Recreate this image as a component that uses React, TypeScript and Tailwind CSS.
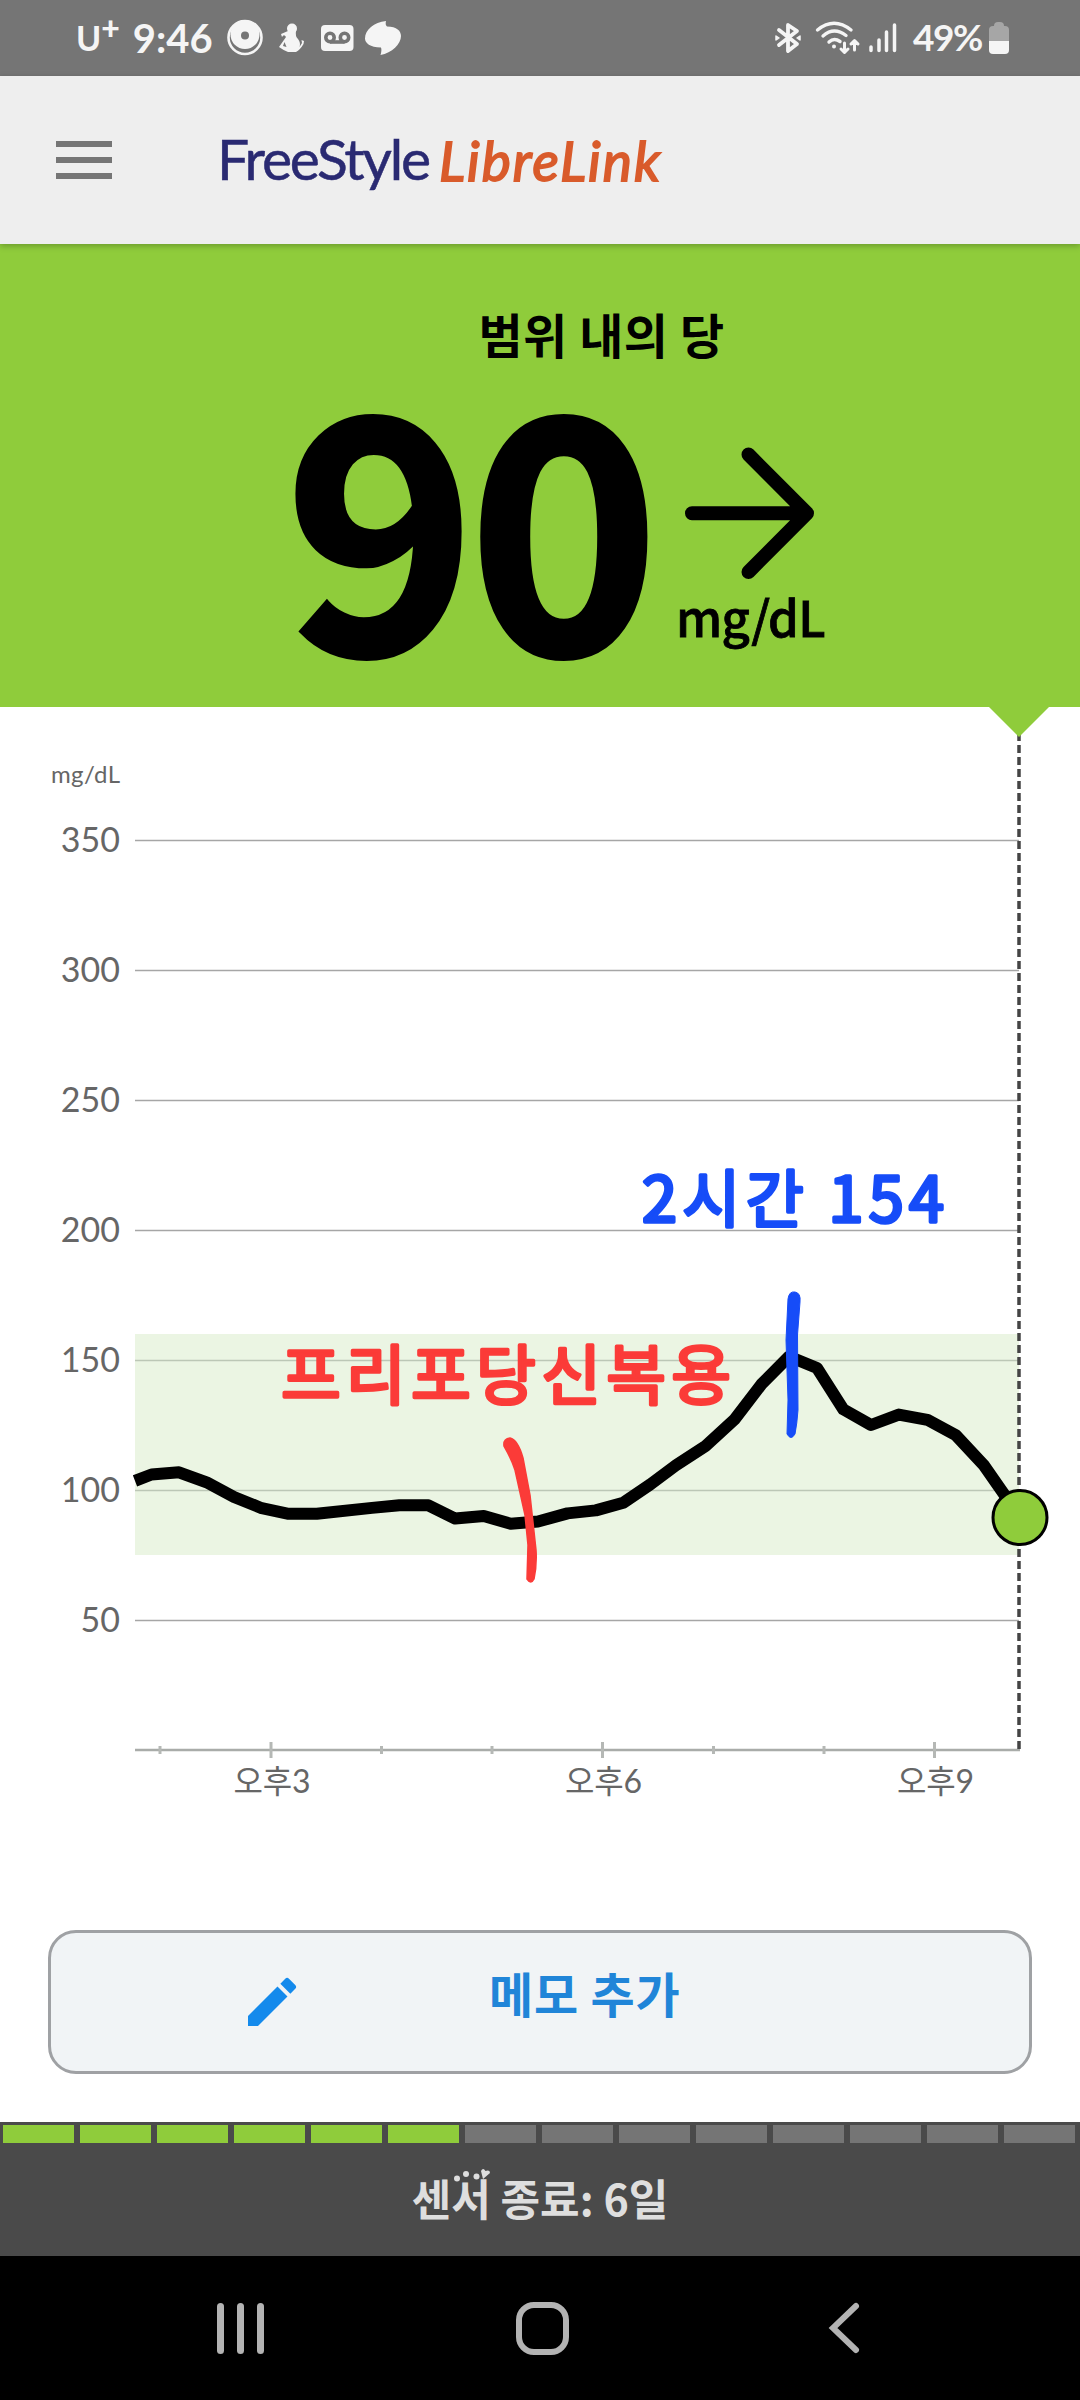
import { MdEdit } from "react-icons/md";

interface Point {
  x: number;
  y: number;
}

const gridLines = [
  { value: 350, y: 840.5 },
  { value: 300, y: 970.5 },
  { value: 250, y: 1100.5 },
  { value: 200, y: 1230.5 },
  { value: 150, y: 1360.5 },
  { value: 100, y: 1490.5 },
  { value: 50, y: 1620.5 },
];

const hourTicks = [
  { x: 160 },
  { x: 271, label: "오후3" },
  { x: 381.5 },
  { x: 492 },
  { x: 602.5, label: "오후6" },
  { x: 713.5 },
  { x: 824 },
  { x: 934.5, label: "오후9" },
];

const glucose: Point[] = [
  { x: 135, y: 1480.8 },
  { x: 151.5, y: 1474.5 },
  { x: 179, y: 1472.3 },
  { x: 206.6, y: 1482.3 },
  { x: 234, y: 1497 },
  { x: 261.7, y: 1508.2 },
  { x: 288.6, y: 1513.8 },
  { x: 316.8, y: 1513.8 },
  { x: 372, y: 1507.9 },
  { x: 399.4, y: 1505.3 },
  { x: 428.4, y: 1505.3 },
  { x: 455.2, y: 1518.6 },
  { x: 483.8, y: 1516 },
  { x: 510.7, y: 1523.8 },
  { x: 538, y: 1521.5 },
  { x: 567.5, y: 1513.4 },
  { x: 595.8, y: 1510.4 },
  { x: 623.3, y: 1502.7 },
  { x: 650.2, y: 1484.5 },
  { x: 676, y: 1465.3 },
  { x: 706, y: 1445.7 },
  { x: 734.6, y: 1419.4 },
  { x: 761.4, y: 1384.3 },
  { x: 789, y: 1356.5 },
  { x: 817, y: 1368 },
  { x: 843.4, y: 1409.4 },
  { x: 871, y: 1425 },
  { x: 898.8, y: 1414.6 },
  { x: 927.4, y: 1419.8 },
  { x: 956, y: 1435.3 },
  { x: 984.2, y: 1465.7 },
  { x: 1020, y: 1517 },
];

const SENSOR_DAYS = 14;
const DAYS_USED = 6;

function StatusBar() {
  return (
    <div className="flex h-[76px] w-full items-center bg-[#757575] pl-[76px] pr-[71px] font-['Lato','Noto_Sans_CJK_KR',sans-serif] text-[#f5f5f5]">
      <span className="text-[34px] font-bold leading-none">U</span>
      <span className="-mt-5 text-[32px] font-black leading-none">+</span>
      <span className="ml-[13px] text-[40px] font-bold leading-none">9:46</span>
      <svg className="ml-auto h-[56px] w-[180px] shrink-0" viewBox="225 10 180 56" fill="#f5f5f5">
        <circle cx="245" cy="37.5" r="16.5" fill="none" stroke="#f5f5f5" strokeWidth="2.6" />
        <circle cx="245" cy="34.5" r="14.5" />
        <circle cx="245" cy="35.5" r="4" fill="#757575" />
        <circle cx="292" cy="28.5" r="5" />
        <path d="M288 31 H296 Q295 36 298 39 Q301 43 299.500 47 L302 43 L301.500 40 L304 41 L303.500 44 Q300 50 296 52 H288 Q283 50 279 47 L286 37 Q284 33.500 282 37 L281 34 Z" />
        <path d="M284.500 42 L283 46 L286.500 47 Z" fill="#757575" />
        <rect x="321" y="25" width="32.5" height="26" rx="4" />
        <g fill="none" stroke="#757575" strokeWidth="3.6">
          <circle cx="330" cy="37.5" r="4.2" />
          <circle cx="344.5" cy="37.5" r="4.2" />
          <path d="M330 42 H344.500" />
        </g>
        <path d="M386 21 Q385 25 387 26.500 C397 26.500 401 31 401 36 C401 44 392 53 380.500 55 Q382 50 381 47.500 C370 47.500 365 43 365 38.500 C365 30 374 22 386 21 Z" />
      </svg>
      <svg className="ml-[360px] h-[56px] w-[136px] shrink-0" viewBox="765 10 136 56" fill="none" stroke="#f5f5f5" strokeWidth="3.8" strokeLinecap="round" strokeLinejoin="round">
        <path d="M779 30 L797 44 L788 51 V25 L797 31 L779 45" />
        <path d="M776 36 V40 L779 38 Z M800 36 V40 L797 38 Z" strokeWidth="1.5" fill="#f5f5f5" />
        <g strokeWidth="3.4">
          <path d="M817.500 30 Q834 16.500 851 30" />
          <path d="M823 36 Q834 26.500 846 35.500" />
          <path d="M829 42 Q834 37.500 840 41.500" />
          <path d="M844.500 43 V52 M841 49 L844.500 52.500 L848 49 M854.500 50 V41 M851 44 L854.500 40.500 L858 44" strokeWidth="3" />
        </g>
        <circle cx="834" cy="46.5" r="2" fill="#f5f5f5" stroke="none" />
        <path d="M871 47 V50.500 M879 40 V50.500 M886.500 32 V50.500 M894.500 25 V50.500" strokeWidth="3.5" />
      </svg>
      <span className="-mt-1 ml-[12px] w-[76px] shrink-0 whitespace-nowrap text-[37px] font-bold leading-none tracking-[-1.5px]">49%</span>
      <div className="flex shrink-0 flex-col items-center">
        <span className="h-1 w-[10px] rounded-t-sm bg-[#a6a6a6]" />
        <span className="h-[15px] w-5 rounded-t bg-[#a6a6a6]" />
        <span className="h-[13px] w-5 rounded-b bg-[#f5f5f5]" />
      </div>
    </div>
  );
}

function AppBar() {
  return (
    <div className="relative z-10 flex h-[168px] items-center bg-[#eeeeee] pl-14 shadow-[0_2px_6px_rgba(0,0,0,0.25)]">
      <div className="flex flex-col gap-[10px]">
        <span className="h-1.5 w-14 bg-[#757575]" />
        <span className="h-1.5 w-14 bg-[#757575]" />
        <span className="h-1.5 w-14 bg-[#757575]" />
      </div>
      <svg className="ml-[88px] h-[100px] w-[490px]" viewBox="200 110 490 100">
        <text x="217" y="180" textLength="214" className="font-['Lato',sans-serif] text-[57px]" fill="#2a2a72" stroke="#2a2a72" strokeWidth="0.5">
          FreeStyle
        </text>
        <text x="439" y="181" textLength="221" className="font-['Lato',sans-serif] text-[55px] italic" fill="#d95b2b" stroke="#d95b2b" strokeWidth="1.8">
          LibreLink
        </text>
      </svg>
    </div>
  );
}

function CurrentReading() {
  return (
    <div className="flex h-[463px] flex-col bg-[#8fcc3b] font-['Noto_Sans_CJK_KR',sans-serif] text-black">
      <h1 className="mt-[59px] pl-[123px] text-center text-[48px] font-bold leading-[60px] tracking-[0.5px]">범위 내의 당</h1>
      <div className="flex pl-[285px]">
        <span className="mt-[30px] h-[240px] w-[391px] text-[323px] font-bold leading-[240px] tracking-[-7px] [-webkit-text-stroke:5px_black]">90</span>
        <div className="flex flex-col">
          <svg className="ml-1 mt-[77px] h-[140px] w-[150px]" viewBox="680 440 150 140" fill="none" stroke="black" strokeWidth="14" strokeLinecap="round" strokeLinejoin="round">
            <path d="M692 513.300 H807 M748.500 454.500 L807 513.300 L748.500 572" />
          </svg>
          <span className="text-[49px] font-medium leading-[72px] tracking-[-0.8px] [-webkit-text-stroke:0.8px_black]">mg/dL</span>
        </div>
      </div>
    </div>
  );
}

function GlucoseChart() {
  const line = glucose.map((p) => `${p.x},${p.y}`).join(" ");

  return (
    <svg className="h-[1193px] w-[1080px] shrink-0 font-['Lato','Noto_Sans_CJK_KR',sans-serif]" viewBox="0 707 1080 1193">
      <rect x="135" y="1334" width="884" height="221" fill="#ebf5e3" />

      <text x="51" y="783" textLength="69" className="text-[24px]" fill="#666">
        mg/dL
      </text>
      {gridLines.map((g) => (
        <g key={g.value}>
          <line x1="135" x2="1019" y1={g.y} y2={g.y} stroke={g.y > 1300 && g.y < 1560 ? "#bcc7b6" : "#a6a6a6"} strokeWidth="1.5" />
          <text x="120" y={g.y + 11.5} textAnchor="end" className="text-[34px]" fill="#666">
            {g.value}
          </text>
        </g>
      ))}

      <line x1="135" x2="1020" y1="1750" y2="1750" stroke="#a9aca9" strokeWidth="2.5" />
      {hourTicks.map((t) => (
        <g key={t.x}>
          <line x1={t.x} x2={t.x} y1={t.label ? 1742 : 1746} y2={t.label ? 1758 : 1754} stroke="#b5b8b5" strokeWidth="3" />
          {t.label && (
            <text x={t.x + 1} y="1793" textAnchor="middle" textLength="77" className="text-[32px]" fill="#666">
              {t.label}
            </text>
          )}
        </g>
      ))}

      <line x1="1019" x2="1019" y1="733" y2="1750" stroke="#444" strokeWidth="3.5" strokeDasharray="8 4" />
      <path d="M988 706 H1050 L1019 737 Z" fill="#8fcc3b" />

      <polyline points={line} fill="none" stroke="black" strokeWidth="12" strokeLinejoin="round" />
      <circle cx="1020" cy="1517.5" r="27" fill="#8fcc3b" stroke="black" strokeWidth="3" />

      {/* notes */}
      <g strokeLinejoin="round" strokeWidth="3.5" className="font-['Noto_Sans_CJK_KR',sans-serif]">
        <text x="281" y="1399" textLength="450" className="text-[65px]" fill="#fb3b38" stroke="#fb3b38">
          프리포당신복용
        </text>
        <text x="642" y="1222" textLength="302" className="text-[63px]" fill="#164cf8" stroke="#164cf8">
          2시간 154
        </text>
      </g>
      <path
        d="M504 1446 Q503 1439 510 1438 Q518 1440 523 1458 L530 1495 L536 1550 Q537 1565 534 1579 Q531 1585 527 1579 L528 1545 L525 1515 L515 1470 Q511 1458 504 1446 Z"
        fill="#fb3b38"
        stroke="#fb3b38"
        strokeWidth="1.5"
      />
      <path
        d="M788 1299 Q789 1291 795 1292 Q801 1293 800 1302 L797.500 1335 L798 1410 Q797 1424 795 1434 Q791 1441 787 1434 L788 1400 L786 1340 Z"
        fill="#164cf8"
        stroke="#164cf8"
      />
    </svg>
  );
}

function AddNoteButton() {
  return (
    <button className="mx-12 mt-[30px] flex h-36 shrink-0 items-center rounded-[28px] border-[3px] border-[#9fa1a4] bg-[#f1f4f6] pl-[189px]">
      <MdEdit className="size-16 text-[#148aec]" />
      <span className="-mt-5 ml-[185px] font-['Noto_Sans_CJK_KR',sans-serif] text-[48px] font-bold tracking-[0.8px] text-[#2085d8]">메모 추가</span>
    </button>
  );
}

function SensorLife() {
  return (
    <div className="mt-12 h-[134px] bg-[#4a4a4a] pt-[3px]">
      <div className="flex gap-1.5 pl-[3px]">
        {Array.from({ length: SENSOR_DAYS }, (_, i) => (
          <span key={i} className={i < DAYS_USED ? "h-[18px] w-[71px] shrink-0 bg-[#8fcc3b]" : "h-[18px] w-[71px] shrink-0 bg-[#757575]"} />
        ))}
      </div>
      <p className="relative mt-[22px] text-center font-['Noto_Sans_CJK_KR',sans-serif] text-[43px] font-bold leading-[64px] text-[#dedede]">
        센서 종료: 6일
        <svg className="absolute left-[452px] top-0.5 h-4 w-10" viewBox="0 0 40 16" fill="currentColor">
          <circle cx="5" cy="11.5" r="3" />
          <circle cx="14" cy="7" r="3" />
          <circle cx="24.5" cy="9.5" r="3" />
          <path d="M31 12 L29 4 Q31 0 33.500 4 Q38 2.500 38 6 Z" />
        </svg>
      </p>
    </div>
  );
}

function NavigationBar() {
  return (
    <div className="flex h-36 items-center bg-black text-[#b3b3b3]">
      <div className="ml-[217px] flex gap-[13.5px]">
        <span className="h-[51px] w-[6.5px] rounded-full bg-current" />
        <span className="h-[51px] w-[6.5px] rounded-full bg-current" />
        <span className="h-[51px] w-[6.5px] rounded-full bg-current" />
      </div>
      <span className="ml-[252px] size-[53px] rounded-[18px] border-[6.5px] border-current" />
      <svg className="ml-[257px] h-[56px] w-[36px]" viewBox="0 0 36 56" fill="none" stroke="currentColor" strokeWidth="6" strokeLinecap="round">
        <path d="M30 6 L7 28 L30 50" />
      </svg>
    </div>
  );
}

export default function App() {
  return (
    <div className="flex h-[2400px] w-[1080px] flex-col overflow-hidden bg-white">
      <StatusBar />
      <AppBar />
      <CurrentReading />
      <GlucoseChart />
      <AddNoteButton />
      <SensorLife />
      <NavigationBar />
    </div>
  );
}
